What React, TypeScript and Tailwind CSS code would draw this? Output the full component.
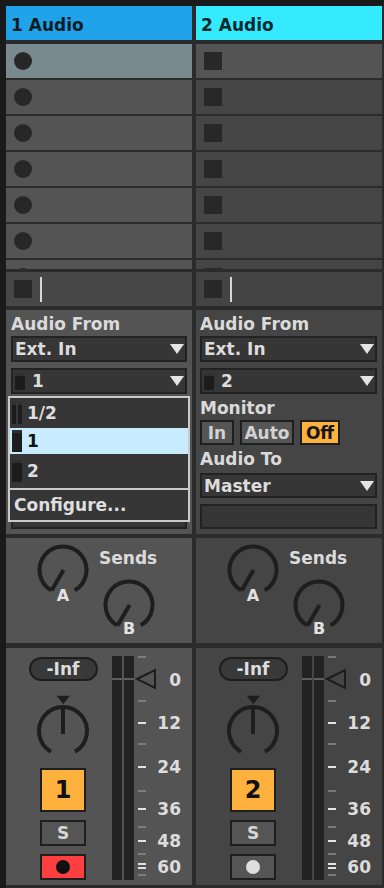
import React from "react";

type ChProps = {
  n: string;
  headerBg: string;
  headerText: string;
  bg: string;
  slot1Bg: string;
  stopBg: string;
  round: boolean;
  popup: boolean;
  armOn: boolean;
  padL: string;
};

function SlotIcon({ round }: { round: boolean }) {
  return round ? (
    <div className="w-[18px] h-[18px] rounded-full bg-[#272727]" />
  ) : (
    <div className="w-[18px] h-[18px] bg-[#282828]" />
  );
}

function Tri() {
  return (
    <svg width="14" height="10" viewBox="0 0 14 10" className="shrink-0">
      <polygon points="0,0 14,0 7,10" fill="#e4e4e4" />
    </svg>
  );
}

function MonoIcon() {
  return <div className="w-[10px] h-[17px] bg-[#1c1c1c] border-t-[3px] border-t-[#303030] shrink-0" />;
}

function Label({ children, className = "" }: { children: React.ReactNode; className?: string }) {
  return (
    <div className={`h-[20px] leading-[20px] text-[17px] font-bold text-[#dadada] whitespace-nowrap ${className}`}>
      {children}
    </div>
  );
}

function Box({ children, className = "" }: { children?: React.ReactNode; className?: string }) {
  return (
    <div
      className={`flex items-center border-2 border-[#222222] bg-[#363636] pl-[2px] pr-[1px] text-[17px] font-bold leading-[20px] text-[#dcdcdc] whitespace-nowrap ${className}`}
    >
      {children}
    </div>
  );
}

function SendKnob() {
  return (
    <svg width="56" height="56" viewBox="0 0 56 56" className="shrink-0">
      <path d="M16.25 48.35 A23.5 23.5 0 1 1 39.75 48.35" fill="none" stroke="#1e1e1e" strokeWidth="4" />
      <line x1="28.5" y1="28" x2="16.6" y2="48.4" stroke="#1e1e1e" strokeWidth="4" />
    </svg>
  );
}

function PanKnob() {
  return (
    <svg width="56" height="66" viewBox="0 0 56 66" className="mt-[13px] shrink-0">
      <polygon points="21.7,1.7 35,1.7 28.3,10.3" fill="#1e1e1e" />
      <path d="M16 57.8 A24 24 0 1 1 40 57.8" fill="none" stroke="#1e1e1e" strokeWidth="4" />
      <line x1="28" y1="12" x2="28" y2="40" stroke="#1e1e1e" strokeWidth="4" />
    </svg>
  );
}

const minorTicks = [9, 53, 96, 143, 179, 206, 227];
const majorTicks = [75, 119, 161, 193, 216, 220];
const scaleLabels = [
  { t: "0", top: "top-[22px]" },
  { t: "12", top: "top-[65px]" },
  { t: "24", top: "top-[109px]" },
  { t: "36", top: "top-[151px]" },
  { t: "48", top: "top-[183px]" },
  { t: "60", top: "top-[209px]" },
];

function Scale() {
  return (
    <div className="relative w-[58px] h-full">
      <svg width="58" height="237" viewBox="0 0 58 237" className="absolute left-0 top-0">
        {minorTicks.map((y) => (
          <rect key={"m" + y} x="4" y={y - 0.75} width="8" height="1.5" fill="#8a8a8a" />
        ))}
        {majorTicks.map((y) => (
          <rect key={"M" + y} x="4" y={y - 1} width="8" height="2" fill="#e2e2e2" />
        ))}
        <polygon points="3,31 21,22 21,40" fill="none" stroke="#1c1c1c" strokeWidth="2" />
      </svg>
      {scaleLabels.map((l) => (
        <div
          key={l.t}
          className={`absolute right-[11px] ${l.top} h-[20px] leading-[20px] text-[17px] font-bold text-[#dcdcdc]`}
        >
          {l.t}
        </div>
      ))}
    </div>
  );
}

function MeterBar() {
  return (
    <div className="w-[10px] h-[224px] flex flex-col">
      <div className="h-[22px] bg-[#222222]" />
      <div className="h-[2px] bg-[#5e5e5e]" />
      <div className="flex-1 bg-[#222222]" />
    </div>
  );
}

function Popup() {
  return (
    <div className="absolute left-[2px] top-[86px] w-[182px] h-[126px] border-2 border-[#cacaca] bg-[#363636] flex flex-col text-[17px] font-bold leading-[20px] text-[#dedede]">
      <div className="h-[29px] flex items-center pl-[2px]">
        <div className="flex gap-[2px] shrink-0">
          <div className="w-[4px] h-[22px] bg-[#1c1c1c] border-t-[3px] border-t-[#303030]" />
          <div className="w-[4px] h-[22px] bg-[#1c1c1c] border-t-[3px] border-t-[#303030]" />
        </div>
        <span className="ml-[5px]">1/2</span>
      </div>
      <div className="mt-[1px] h-[26px] flex items-center pl-[2px] bg-[#c8ecfd] text-[#111111]">
        <div className="w-[10px] h-[22px] bg-[#1c1c1c] border-t-[3px] border-t-[#303030] shrink-0" />
        <span className="ml-[5px]">1</span>
      </div>
      <div className="h-[34px] flex items-center pl-[2px]">
        <div className="w-[10px] h-[22px] bg-[#1c1c1c] border-t-[3px] border-t-[#303030] shrink-0" />
        <span className="ml-[5px]">2</span>
      </div>
      <div className="h-[2px] bg-[#cacaca]" />
      <div className="h-[30px] flex items-center pl-[4px]">Configure...</div>
    </div>
  );
}

function Channel(p: ChProps) {
  const slots = [0, 1, 2, 3, 4, 5, 6];
  return (
    <div className="w-[186px] flex flex-col shrink-0">
      <div
        className={`h-[34px] pl-[5px] pt-[9px] text-[17px] font-bold leading-[20px] whitespace-nowrap ${p.headerBg} ${p.headerText}`}
      >
        {p.n} Audio
      </div>
      <div className="mt-[4px] h-[225px] overflow-hidden flex flex-col gap-[2px]">
        {slots.map((i) => (
          <div
            key={i}
            className={`h-[34px] shrink-0 flex items-center pl-[8px] ${i === 0 ? p.slot1Bg : p.bg}`}
          >
            <SlotIcon round={p.round} />
          </div>
        ))}
      </div>
      <div className={`mt-[3px] h-[34px] flex items-center pl-[8px] ${p.stopBg}`}>
        <div className="w-[18px] h-[18px] bg-[#282828]" />
        <div className="ml-[8px] w-[2px] h-[25px] bg-[#d6d6d6]" />
      </div>

      <div className={`relative mt-[4px] h-[224px] flex flex-col pt-[4px] pr-[5px] ${p.padL} ${p.bg}`}>
        <Label>Audio From</Label>
        <Box className="mt-[2px] h-[26px]">
          <span>Ext. In</span>
          <span className="ml-auto">
            <Tri />
          </span>
        </Box>
        <Box className="mt-[6px] h-[26px]">
          <MonoIcon />
          <span className="ml-[7px]">{p.n}</span>
          <span className="ml-auto">
            <Tri />
          </span>
        </Box>
        {p.popup ? (
          <div className="h-[104px]" />
        ) : (
          <>
            <Label className="mt-[4px]">Monitor</Label>
            <div className="mt-[2px] h-[25px] flex gap-[6px] text-[17px] font-bold leading-[20px]">
              <div className="w-[34px] border-2 border-[#1e1e1e] bg-[#555555] text-[#d2d2d2] flex items-center justify-center">
                In
              </div>
              <div className="w-[54px] border-2 border-[#1e1e1e] bg-[#555555] text-[#d2d2d2] flex items-center justify-center">
                Auto
              </div>
              <div className="w-[40px] border-2 border-[#1e1e1e] bg-[#ffb13e] text-[#161616] flex items-center justify-center">
                Off
              </div>
            </div>
            <Label className="mt-[4px]">Audio To</Label>
            <Box className="mt-[4px] h-[25px]">
              <span>Master</span>
              <span className="ml-auto">
                <Tri />
              </span>
            </Box>
          </>
        )}
        <Box className="mt-[6px] h-[25px]" />
        {p.popup && <Popup />}
      </div>

      <div className={`mt-[4px] h-[105px] flex pl-[29px] pt-[4px] ${p.bg}`}>
        <div className="w-[56px] flex flex-col items-center">
          <SendKnob />
          <div className="-mt-[12px] h-[20px] leading-[20px] text-[16px] font-bold text-[#e2e2e2]">A</div>
        </div>
        <div className="ml-[8px] flex flex-col">
          <div className="mt-[6px] h-[20px] leading-[20px] text-[17px] font-bold text-[#dadada]">Sends</div>
          <div className="ml-[2px] mt-[9px] w-[56px] flex flex-col items-center">
            <SendKnob />
            <div className="-mt-[14px] h-[20px] leading-[20px] text-[16px] font-bold text-[#e2e2e2]">B</div>
          </div>
        </div>
      </div>

      <div className={`mt-[5px] h-[237px] flex ${p.bg}`}>
        <div className="w-[106px] pl-[8px] pt-[9px] flex flex-col items-center shrink-0">
          <div className="w-[69px] h-[24px] rounded-full border-2 border-[#1e1e1e] bg-[#393939] flex items-center justify-center text-[17px] font-bold leading-[20px] text-[#dcdcdc]">
            -Inf
          </div>
          <PanKnob />
          <div className="mt-[8px] w-[46px] h-[44px] border-2 border-[#1e1e1e] bg-[#ffb13e] flex items-center justify-center text-[24px] font-bold leading-[28px] text-[#111111]">
            {p.n}
          </div>
          <div className="mt-[8px] w-[46px] h-[26px] border-2 border-[#1e1e1e] bg-[#555555] flex items-center justify-center text-[17px] font-bold leading-[20px] text-[#d6d6d6]">
            S
          </div>
          <div
            className={`mt-[8px] w-[46px] h-[26px] border-2 border-[#1e1e1e] flex items-center justify-center ${
              p.armOn ? "bg-[#ff3f3f]" : "bg-[#555555]"
            }`}
          >
            <div className={`w-[14px] h-[14px] rounded-full ${p.armOn ? "bg-[#111111]" : "bg-[#dedede]"}`} />
          </div>
        </div>
        <div className="pt-[8px] flex gap-[2px] shrink-0">
          <MeterBar />
          <MeterBar />
        </div>
        <Scale />
      </div>
    </div>
  );
}

export default function App() {
  return (
    <div
      className="w-[384px] h-[888px] overflow-hidden bg-[#1a1a1a] flex"
      style={{ fontFamily: '"DejaVu Sans", "Liberation Sans", sans-serif' }}
    >
      <div className="w-[6px] shrink-0" />
      <div className="flex-1 flex flex-col">
        <div className="h-[6px] shrink-0" />
        <div className="flex-1 bg-[#2b2b2b] flex gap-[4px] pr-[2px]">
          <Channel
            n="1"
            headerBg="bg-[#21a3e9]"
            headerText="text-[#0d1d28]"
            bg="bg-[#545454]"
            slot1Bg="bg-[#788a8e]"
            stopBg="bg-[#474747]"
            round={true}
            popup={true}
            armOn={true}
            padL="pl-[5px]"
          />
          <Channel
            n="2"
            headerBg="bg-[#33eaff]"
            headerText="text-[#0a2a30]"
            bg="bg-[#454545]"
            slot1Bg="bg-[#545454]"
            stopBg="bg-[#444444]"
            round={false}
            popup={false}
            armOn={false}
            padL="pl-[4px]"
          />
        </div>
      </div>
    </div>
  );
}
